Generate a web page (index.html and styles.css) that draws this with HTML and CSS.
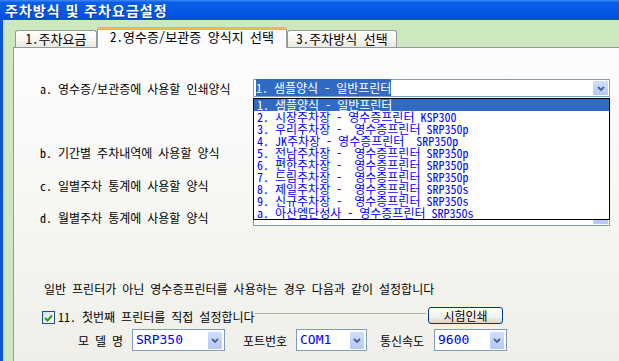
FILE: index.html
```html
<!DOCTYPE html>
<html lang="ko">
<head>
    <meta charset="UTF-8">
    <meta name="viewport" content="width=device-width, initial-scale=1.0">
    <title>주차방식 및 주차요금설정</title>
    <link rel="stylesheet" href="styles.css">
</head>
<body>
    <div class="window">
        <!-- Title bar -->
        <div class="titlebar">주차방식 및 주차요금설정</div>

        <div class="client">
            <!-- Tabs -->
            <div class="tabs">
                <div class="tab tab_first">1.주차요금</div>
                <div class="tab tab_active">2.영수증/보관증 양식지 선택</div>
                <div class="tab tab_third">3.주차방식 선택</div>
            </div>

            <div class="panel">
                <!-- Print form rows -->
                <div class="form_row row_a">
                    <span class="field_label">a. 영수증/보관증에 사용할 인쇄양식</span>
                    <div class="combo combo_wide">
                        <span class="combo_value"><span class="selected_text">1. 샘플양식 - 일반프린터</span></span>
                        <span class="combo_btn"><svg width="8" height="5" viewBox="0 0 8 5"><polyline points="1,1 4,4 7,1" fill="none" stroke="#4d6185" stroke-width="1.8"/></svg></span>
                    </div>
                </div>
                <div class="form_row row_b">
                    <span class="field_label">b. 기간별 주차내역에 사용할 양식</span>
                    <div class="combo combo_wide">
                        <span class="combo_value"></span>
                        <span class="combo_btn"></span>
                    </div>
                </div>
                <div class="form_row row_c">
                    <span class="field_label">c. 일별주차 통계에 사용할 양식</span>
                    <div class="combo combo_wide">
                        <span class="combo_value"></span>
                        <span class="combo_btn"></span>
                    </div>
                </div>
                <div class="form_row row_d">
                    <span class="field_label">d. 월별주차 통계에 사용할 양식</span>
                    <div class="combo combo_wide">
                        <span class="combo_value"></span>
                        <span class="combo_btn"></span>
                    </div>
                </div>

                <!-- Open dropdown list of row a -->
                <ul class="dropdown">
                    <li class="picked">1. 샘플양식 - 일반프린터</li>
                    <li>2. 시장주차장 - 영수증프린터 KSP300</li>
                    <li>3. 우리주차장 -  영수증프린터 SRP350p</li>
                    <li>4. JK주차장 - 영수증프린터  SRP350p</li>
                    <li>5. 전남주차장 -  영수증프린터 SRP350p</li>
                    <li>6. 편한주차장 -  영수증프린터 SRP350p</li>
                    <li>7. 드림주차장 -  영수증프린터 SRP350p</li>
                    <li>8. 제일주차장 -  영수증프린터 SRP350s</li>
                    <li>9. 신규주차장 -  영수증프린터 SRP350s</li>
                    <li>a. 아산엠단성사 - 영수증프린터 SRP350s</li>
                </ul>

                <p class="notice">일반 프린터가 아닌 영수증프린터를 사용하는 경우 다음과 같이 설정합니다</p>

                <!-- Receipt printer group -->
                <div class="check_row">
                    <span class="checkbox"><svg width="9" height="8" viewBox="0 0 9 8"><polyline points="1,4 3.5,6.5 8,1.5" fill="none" stroke="#21a121" stroke-width="2"/></svg></span>
                    <span class="check_label">11. 첫번째 프린터를 직접 설정합니다</span>
                    <span class="group_line"></span>
                    <button class="test_button">시험인쇄</button>
                </div>

                <div class="port_row">
                    <span class="port_label label_model">모 델 명</span>
                    <div class="combo combo_small combo_model">
                        <span class="combo_value">SRP350</span>
                        <span class="combo_btn"><svg width="8" height="5" viewBox="0 0 8 5"><polyline points="1,1 4,4 7,1" fill="none" stroke="#4d6185" stroke-width="1.8"/></svg></span>
                    </div>
                    <span class="port_label label_port">포트번호</span>
                    <div class="combo combo_small combo_port">
                        <span class="combo_value">COM1</span>
                        <span class="combo_btn"><svg width="8" height="5" viewBox="0 0 8 5"><polyline points="1,1 4,4 7,1" fill="none" stroke="#4d6185" stroke-width="1.8"/></svg></span>
                    </div>
                    <span class="port_label label_speed">통신속도</span>
                    <div class="combo combo_small combo_speed">
                        <span class="combo_value">9600</span>
                        <span class="combo_btn"><svg width="8" height="5" viewBox="0 0 8 5"><polyline points="1,1 4,4 7,1" fill="none" stroke="#4d6185" stroke-width="1.8"/></svg></span>
                    </div>
                </div>
            </div>
        </div>
    </div>
</body>
</html>
```

FILE: styles.css
```css
body {
    margin: 0;
    padding: 0;
    overflow: hidden;
    font-family: "Noto Sans Mono CJK KR", "Noto Sans CJK KR", sans-serif;
    font-size: 12px;
    color: #000000;
    background-color: #cde8bf;
}

.window {
    width: 619px;
    height: 361px;
    overflow: hidden;
}

.titlebar {
    height: 20px;
    line-height: 20px;
    padding-left: 5px;
    color: #ffffff;
    font-family: "Noto Sans CJK KR", sans-serif;
    font-weight: bold;
    font-size: 14px;
    letter-spacing: 1px;
    background: linear-gradient(to bottom, #3d8af7 0, #0a5ee8 12%, #0054e3 80%, #0a4fd0 100%);
    text-shadow: 1px 1px 0 #0a3fa8;
}

.client {
    height: 341px;
    border-left: 3px solid #0d55df;
    padding: 7px 0 0 10px;
    background-color: #cde8bf;
}

/* Tabs */
.tabs {
    display: flex;
    align-items: flex-end;
    height: 21px;
    margin-left: 2px;
    margin-bottom: -1px;
    position: relative;
    z-index: 1;
}

.tab {
    box-sizing: border-box;
    height: 17px;
    margin-bottom: 1px;
    line-height: 15px;
    font-size: 13px;
    text-align: center;
    border: 1px solid #919b9c;
    border-bottom: none;
    border-radius: 3px 3px 0 0;
    background: linear-gradient(to bottom, #ffffff 0, #f5f4f0 60%, #e9e8e2 100%);
}

.tab_first {
    width: 82px;
}

.tab_third {
    width: 110px;
}

.tab_active {
    width: 190px;
    height: 21px;
    margin-bottom: 0;
    line-height: 14px;
    padding-bottom: 4px;
    border-top: 3px solid #f4b63d;
    background: #fcfcfe;
}

/* Tab page */
.panel {
    position: relative;
    box-sizing: border-box;
    width: 640px;
    height: 330px;
    border: 1px solid #919b9c;
    padding: 31px 0 0 26px;
    background: linear-gradient(to bottom, #fdfdfe 0, #f7f7f4 45%, #efeee8 100%);
}

.form_row {
    display: flex;
    align-items: center;
    height: 18px;
}

.row_b {
    margin-top: 46px;
}

.row_c {
    margin-top: 15px;
}

.row_d {
    margin-top: 14px;
}

.field_label {
    width: 213px;
    white-space: pre;
}

/* Combo boxes */
.combo {
    display: flex;
    box-sizing: border-box;
    border: 1px solid #7f9db9;
    background-color: #ffffff;
}

.combo_wide {
    width: 357px;
    height: 18px;
}

.combo_value {
    flex: 1;
    padding-left: 2px;
    line-height: 16px;
    white-space: pre;
}

.selected_text {
    background-color: #316ac5;
    color: #ffffff;
}

.combo_btn {
    display: flex;
    align-items: center;
    justify-content: center;
    width: 15px;
    margin: 1px;
    border-radius: 1px;
    background: linear-gradient(to bottom, #d2ddfb 0, #c1d3fb 50%, #b4c8f6 100%);
}

.combo_small {
    height: 22px;
}

.combo_small .combo_value {
    padding-left: 3px;
    line-height: 20px;
    color: #0000ff;
    font-family: "DejaVu Sans Mono", monospace;
    font-size: 13px;
}

.combo_small .combo_btn {
    width: 14px;
    margin: 2px 2px 1px 0;
}

.combo_model {
    width: 93px;
}

.combo_port {
    width: 71px;
}

.combo_speed {
    width: 73px;
}

/* Dropdown list */
.dropdown {
    position: absolute;
    left: 239px;
    top: 50px;
    z-index: 2;
    box-sizing: border-box;
    width: 357px;
    margin: 0;
    padding: 0;
    list-style: none;
    border: 1px solid #000000;
    background-color: #ffffff;
}

.dropdown li {
    height: 12px;
    line-height: 12px;
    padding-left: 3px;
    font-size: 12px;
    color: #0000ff;
    white-space: pre;
}

.dropdown li.picked {
    background-color: #316ac5;
    color: #ffffff;
}

.notice {
    margin: 55px 0 0 4px;
    line-height: 16px;
}

/* Receipt printer settings */
.check_row {
    display: flex;
    align-items: flex-start;
    width: 461px;
    height: 18px;
    margin: 10px 0 0 2px;
}

.checkbox {
    display: flex;
    align-items: center;
    justify-content: center;
    box-sizing: border-box;
    width: 13px;
    height: 13px;
    margin-top: 4px;
    border: 1px solid #1c5180;
    background: linear-gradient(135deg, #dcdcd7 0, #ffffff 100%);
}

.check_label {
    margin: 3px 0 0 3px;
    line-height: 14px;
}

.group_line {
    flex: 1;
    margin: 6px 2px 0 0;
    border-top: 1px solid #b0b0a4;
}

.test_button {
    box-sizing: border-box;
    width: 75px;
    height: 17px;
    padding: 0;
    font-family: inherit;
    font-size: 12px;
    line-height: 14px;
    border: 1px solid #003c74;
    border-radius: 3px;
    background: linear-gradient(to bottom, #ffffff 0, #f2f1ec 60%, #d9d5cb 100%);
}

.port_row {
    display: flex;
    align-items: center;
    height: 22px;
    margin: 4px 0 0 38px;
}

.port_label {
    white-space: pre;
}

.label_model {
    width: 54px;
}

.label_port {
    width: 53px;
    margin-left: 18px;
}

.label_speed {
    width: 54px;
    margin-left: 13px;
}
```
